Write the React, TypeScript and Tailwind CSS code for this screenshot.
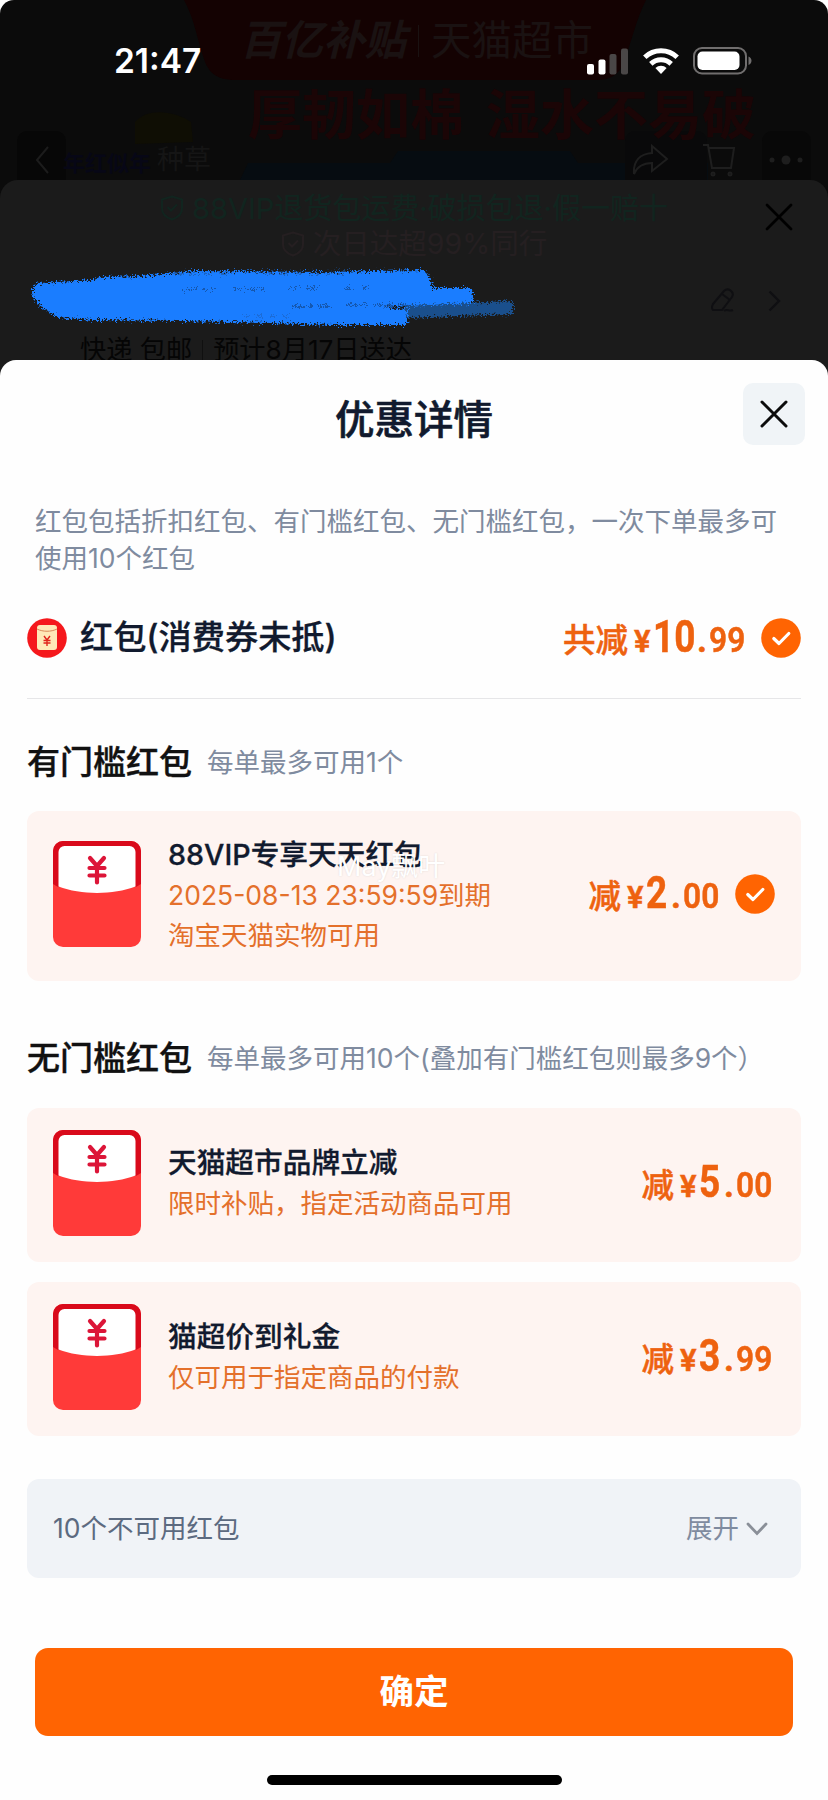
import { ReactNode } from "react";

type Coupon = {
  title: string;
  lines: string[];
  yuan: string;
  cents: string;
  checked?: boolean;
};

const threshold: Coupon = {
  title: "88VIP专享天天红包",
  lines: ["2025-08-13 23:59:59到期", "淘宝天猫实物可用"],
  yuan: "2",
  cents: "00",
  checked: true,
};

const noThreshold: Coupon[] = [
  { title: "天猫超市品牌立减", lines: ["限时补贴，指定活动商品可用"], yuan: "5", cents: "00" },
  { title: "猫超价到礼金", lines: ["仅可用于指定商品的付款"], yuan: "3", cents: "99" },
];

function StatusBar() {
  return (
    <div className="relative flex h-[122px] items-center justify-between pr-[76px] pl-[114px] text-white">
      <span className="mt-[2px] text-[33.5px] leading-none font-semibold">21:47</span>
      <div className="flex items-center gap-[13px]">
        <svg width="42" height="27" viewBox="0 0 42 27">
          <rect x="0" y="16" width="7" height="10.500" rx="2" fill="#fff" />
          <rect x="11.500" y="11.500" width="7" height="15" rx="2" fill="#fff" />
          <rect x="22.500" y="6" width="7" height="20.500" rx="2" fill="#4a4747" />
          <rect x="34" y="0.500" width="7" height="26" rx="2" fill="#4a4747" />
        </svg>
        <svg width="38" height="28" viewBox="0 0 38 28">
          <g fill="none" stroke="#fff" strokeWidth="5">
            <path d="M2.800 10.200a23.500 23.500 0 0 1 32.400 0" />
            <path d="M8.800 16.800a15 15 0 0 1 20.400 0" />
          </g>
          <path d="M19 27l-5.600-6a8.300 8.300 0 0 1 11.200 0z" fill="#fff" />
        </svg>
        <svg width="59" height="28" viewBox="0 0 59 28">
          <rect x="1" y="1" width="52" height="25.500" rx="8" fill="none" stroke="#706e6e" strokeWidth="2" />
          <rect x="4.500" y="4.500" width="42" height="18.500" rx="5" fill="#fff" />
          <path d="M55.500 9.500c4 1.500 4 7 0 8.500z" fill="#706e6e" />
        </svg>
      </div>
    </div>
  );
}

function DimmedPromo() {
  return (
    <div className="absolute inset-0 overflow-hidden">
      <svg className="absolute inset-0" width="828" height="180" viewBox="0 0 828 180">
        <path d="M184 0h462c-10 20-14 40-22 62-5 12-12 18-28 18H236c-18 0-26-6-31-18-8-22-10-42-21-62z" fill="#140202" />
        <path d="M135 122c12-14 38-12 56 0l2 20-58 2z" fill="#0f0e04" />
        <path d="M240 180l8-17h142l8-12h172l8 12h130v17z" fill="#060c11" />
        <rect x="17" y="131" width="49" height="60" rx="10" fill="#070707" />
        <rect x="625" y="131" width="82" height="60" rx="10" fill="#09090a" />
        <rect x="762" y="131" width="49" height="60" rx="10" fill="#080808" />
      </svg>
      <div className="relative flex h-[82px] items-center gap-[12px] pl-[240px] text-[41.5px] leading-none text-[#1a1212]">
        <b className="italic">百亿补贴</b>
        <i className="h-8 w-px bg-[#1a1212]" />
        <span className="text-[40.5px]">天猫超市</span>
      </div>
      <div className="relative mt-[6px] pl-[248px] text-[54px] leading-[56px] font-bold whitespace-nowrap text-[#1b0506]">
        厚韧如棉<span className="ml-[22px]">湿水不易破</span>
      </div>
      <div className="relative mt-[-2px] flex h-9 items-center pl-[34px]">
        <svg width="16" height="30" viewBox="0 0 16 30" fill="none" stroke="#1c1c1c" strokeWidth="2">
          <path d="M14 2L3 15l11 13" />
        </svg>
        <b className="mt-[6px] ml-[13px] text-[22px] text-[#070716]">年红似年</b>
        <span className="ml-[6px] text-[27px] text-[#151515]">种草</span>
        <svg className="ml-auto" width="38" height="32" viewBox="0 0 38 32" fill="none" stroke="#1e1e1e" strokeWidth="2">
          <path d="M20 2l15 13-15 12v-8C10 19 5 23 2 30 1 17 8 10 20 9z" />
        </svg>
        <svg className="ml-[32px]" width="36" height="36" viewBox="0 0 36 36" fill="none" stroke="#1e1e1e" strokeWidth="2">
          <path d="M1 3h5l4 23h19l3-20H7" />
          <circle cx="11" cy="32" r="1.500" />
          <circle cx="28" cy="32" r="1.500" />
        </svg>
        <svg className="mr-[25px] ml-[31px]" width="34" height="12" viewBox="0 0 34 12" fill="#1e1e1e">
          <circle cx="3" cy="6" r="2.500" />
          <circle cx="17" cy="6" r="4.500" />
          <circle cx="31" cy="6" r="2.500" />
        </svg>
      </div>
    </div>
  );
}

function Shield() {
  return (
    <svg width="24" height="26" viewBox="0 0 24 26" fill="none" stroke="currentColor" strokeWidth="2">
      <path d="M12 1.500l10 3v9c0 5-4 9-10 11-6-2-10-6-10-11v-9z" />
      <path d="M7.500 12l3.500 3.500 6-6" />
    </svg>
  );
}

function Scribble() {
  return (
    <svg className="absolute top-[82px] left-[24px]" width="500" height="72" viewBox="0 0 500 72">
      <defs>
        <filter id="chalk" x="-5%" y="-20%" width="110%" height="140%" colorInterpolationFilters="sRGB">
          <feTurbulence type="fractalNoise" baseFrequency="0.6" numOctaves="2" seed="4" result="n" />
          <feDisplacementMap in="SourceGraphic" in2="n" scale="11" xChannelSelector="R" yChannelSelector="G" />
        </filter>
      </defs>
      <g filter="url(#chalk)">
        <path d="M380 43L489 39v13l-109 4z" fill="#1a4f8c" />
        <path
          d="M8 28L14 21L69 18L76 15L119 14L169 9L300 10L399 8L405 14L409 26L448 26L449 41L359 45L384 48L383 63L309 63L249 61L160 59L69 58L33 55L19 46L9 36Z"
          fill="#1a7dff"
        />
        <g fill="none" stroke="#1558b0" strokeWidth="1.800">
          <path d="M160 27h30m20 0h34m22-1h28m26 0h24" strokeDasharray="7 3 3 4" />
          <path d="M268 44h40m14-1h62" strokeDasharray="12 3 6 5" />
          <path d="M150 12h60m30-1h80" stroke="#1b64c4" strokeDasharray="9 6" />
          <path d="M220 54h50" stroke="#1b6cd8" strokeDasharray="5 8" />
        </g>
      </g>
    </svg>
  );
}

function DimmedSheet() {
  return (
    <div className="relative h-[196px] rounded-t-[18px] bg-[#1b1b1b] pt-[10px]">
      <div className="flex h-9 items-center justify-center gap-2 text-[#11251f]">
        <Shield />
        <span className="text-[29px] leading-none">88VIP退货包运费·破损包退·假一赔十</span>
      </div>
      <div className="flex h-9 items-center justify-center gap-2 text-[#251f21]">
        <Shield />
        <span className="text-[28.500px] leading-none">次日达超99%同行</span>
      </div>
      <Scribble />
      <div className="flex h-[78px] items-center justify-end pr-[47px]">
        <svg width="26" height="28" viewBox="0 0 26 28" fill="none" stroke="#0f0f12" strokeWidth="2">
          <path d="M3 17L14 4c4-4 11 1 8 6L12 23H3c-2-2-1-4 0-6zM12 7l8 6M14 24c3-3 5 1 9-1" />
        </svg>
        <svg className="ml-[32px]" width="13" height="22" viewBox="0 0 13 22" fill="none" stroke="#0f0f12" strokeWidth="2.400">
          <path d="M1.500 1.500L11 11l-9.500 9.500" />
        </svg>
      </div>
      <div className="mt-[-4px] flex items-center pl-[80px] text-[26.2px] leading-[28px] text-[#050505]">
        快递 包邮
        <i className="mx-[10px] h-5 w-px bg-[#101010]" />
        预计8月17日送达
      </div>
      <svg className="absolute top-[23px] right-[35px]" width="28" height="28" viewBox="0 0 28 28" stroke="#000" strokeWidth="2.800" strokeLinecap="round">
        <path d="M2 2l24 24M26 2L2 26" />
      </svg>
    </div>
  );
}

function Check() {
  return (
    <svg width="40" height="40" viewBox="0 0 40 40">
      <circle cx="20" cy="20" r="19.800" fill="#ff6402" />
      <path d="M12.800 20.500l5.200 5 9.800-10" fill="none" stroke="#fff" strokeWidth="3.200" strokeLinecap="round" strokeLinejoin="round" />
    </svg>
  );
}

function Price({ label, yuan, cents }: { label: string; yuan: string; cents: string }) {
  return (
    <div className="flex items-baseline leading-none text-[#ee620f] [-webkit-text-stroke:0.5px_#ee620f]">
      <span className="text-[32.500px] font-medium">{label}</span>
      <span className="ml-[6px] w-[19px]">
        <span className="font-['Roboto'] text-[31px] font-semibold">¥</span>
      </span>
      <span className={yuan.length > 1 ? "w-[40px]" : "w-[21px]"}>
        <span className="inline-block origin-left scale-x-[0.85] font-['Roboto'] text-[43.500px] font-bold">{yuan}</span>
      </span>
      <span className="ml-[4px] w-[12px] font-['Roboto'] text-[34.500px] font-bold">.</span>
      <span className="w-[36px]">
        <span className="inline-block origin-left scale-x-[0.92] font-['Roboto'] text-[34.500px] font-semibold">{cents}</span>
      </span>
    </div>
  );
}

function Envelope() {
  return (
    <svg className="shrink-0" width="88" height="106" viewBox="0 0 88 106">
      <rect width="88" height="106" rx="10" fill="#ff3a39" />
      <path d="M0 43V10A10 10 0 0 1 10 0h68a10 10 0 0 1 10 10v33l-5 3H5z" fill="#d90a1b" />
      <path d="M5.500 45.500V11a6 6 0 0 1 6-6h65a6 6 0 0 1 6 6v34.500C60 54 28 54 5.500 45.500z" fill="#fff" />
      <path
        d="M37 17l7 8 7-8M36.500 27h15M36.500 34.500h15M44 26v15.500"
        fill="none"
        stroke="#dc1538"
        strokeWidth="4.200"
        strokeLinecap="round"
      />
    </svg>
  );
}

function CouponCard({ coupon, children }: { coupon: Coupon; children?: ReactNode }) {
  const { title, lines, yuan, cents, checked } = coupon;
  return (
    <div
      className={`relative flex rounded-xl bg-[#fef4f1] pl-[26px] ${
        checked ? "h-[170px] pt-[30px] pr-[26px]" : "h-[154px] pt-[22px] pr-[29px]"
      }`}
    >
      <Envelope />
      <div className={`ml-[27px] ${checked ? "mt-[-7px]" : "mt-[12px]"}`}>
        <div className="text-[28.700px] leading-[41px] font-medium text-[#111a2e] [-webkit-text-stroke:0.3px_#111a2e]">{title}</div>
        {lines.map((line) => (
          <div key={line} className="text-[26.500px] leading-[40px] text-[#e4702b]">
            {line}
          </div>
        ))}
      </div>
      <div className={`ml-auto flex h-[106px] items-center ${checked ? "gap-[16px]" : ""}`}>
        <Price label="减" yuan={yuan} cents={cents} />
        {checked && <Check />}
      </div>
      {children}
    </div>
  );
}

function SectionTitle({ title, note }: { title: string; note: string }) {
  return (
    <div className="flex h-[40px] items-center gap-[15px]">
      <h2 className="text-[33px] leading-none font-medium text-[#111] [-webkit-text-stroke:0.4px_#111]">{title}</h2>
      <span className="text-[26.500px] leading-none whitespace-nowrap text-[#7f8b9f]">{note}</span>
    </div>
  );
}

export default function App() {
  return (
    <div className="h-[1800px] w-[828px] overflow-hidden bg-white font-['Inter','Noto_Sans_CJK_SC',sans-serif]">
      <div className="relative h-[180px] rounded-t-[14px] bg-[#0b0b0b]">
        <DimmedPromo />
        <StatusBar />
      </div>
      <div className="bg-[#0b0b0b]">
        <DimmedSheet />
      </div>
      <div className="relative mt-[-16px] h-[1440px] rounded-t-[16px] bg-[#fefefe] px-[27px]">
        <div className="flex h-[122px] items-center justify-center">
          <h1 className="text-[39.500px] leading-none font-medium text-[#111a2e] [-webkit-text-stroke:0.6px_#111a2e]">优惠详情</h1>
          <button className="absolute top-[23px] right-[23px] flex size-[62px] items-center justify-center rounded-[10px] bg-[#f0f4f7]">
            <svg width="28" height="28" viewBox="0 0 28 28" stroke="#0c0c0c" strokeWidth="3" strokeLinecap="round">
              <path d="M2 2l24 24M26 2L2 26" />
            </svg>
          </button>
        </div>

        <p className="mt-[21px] px-[8px] text-[26.500px] leading-[37px] text-[#7f8b9f]">
          红包包括折扣红包、有门槛红包、无门槛红包，一次下单最多可
          <br />
          使用10个红包
        </p>

        <div className="mt-[1px] flex h-[121px] items-center border-b border-[#e6e6e8]">
          <svg width="40" height="40" viewBox="0 0 40 40">
            <circle cx="20" cy="20" r="19.800" fill="#f5181c" />
            <rect x="10" y="7" width="20" height="25" rx="3" fill="#ffe9b8" />
            <path d="M10 11c6 3 14 3 20 0" fill="none" stroke="#d98a5c" strokeWidth="1" />
            <path d="M17 18l3 4 3-4M16.500 22.500h7M16.500 25h7M20 22v6" fill="none" stroke="#e0241c" strokeWidth="1.400" />
          </svg>
          <span className="ml-[13px] text-[33.200px] leading-none font-medium text-[#111a2e] [-webkit-text-stroke:0.3px_#111a2e]">
            红包(消费券未抵)
          </span>
          <div className="ml-auto flex items-center gap-[16px]">
            <Price label="共减" yuan="10" cents="99" />
            <Check />
          </div>
        </div>

        <div className="mt-[43px] mb-[29px]">
          <SectionTitle title="有门槛红包" note="每单最多可用1个" />
        </div>
        <CouponCard coupon={threshold}>
          <span className="absolute top-[38px] left-[310px] text-[27px] leading-[36px] text-white [text-shadow:0_0_2px_rgba(0,0,0,0.12)]">
            May飘叶
          </span>
        </CouponCard>

        <div className="mt-[57px] mb-[30px]">
          <SectionTitle title="无门槛红包" note="每单最多可用10个(叠加有门槛红包则最多9个）" />
        </div>
        <div className="flex flex-col gap-[20px]">
          {noThreshold.map((c) => (
            <CouponCard key={c.title} coupon={c} />
          ))}
        </div>

        <div className="mt-[43px] flex h-[99px] items-center justify-between rounded-xl bg-[#f0f3f7] pr-[33px] pl-[26px] text-[26.500px]">
          <span className="text-[#5c6a80]">10个不可用红包</span>
          <span className="flex items-center gap-[7px] text-[#7f8b9f]">
            展开
            <svg width="22" height="14" viewBox="0 0 22 14" fill="none" stroke="#8a8f98" strokeWidth="2.800" strokeLinecap="round">
              <path d="M2 2l9 9.500L20 2" />
            </svg>
          </span>
        </div>

        <button className="mt-[70px] ml-[8px] block h-[88px] w-[758px] rounded-[13px] bg-[#ff6402] text-[34.500px] font-bold text-white">
          确定
        </button>
        <div className="mx-auto mt-[39px] h-[10px] w-[295px] rounded-full bg-black" />
      </div>
    </div>
  );
}
